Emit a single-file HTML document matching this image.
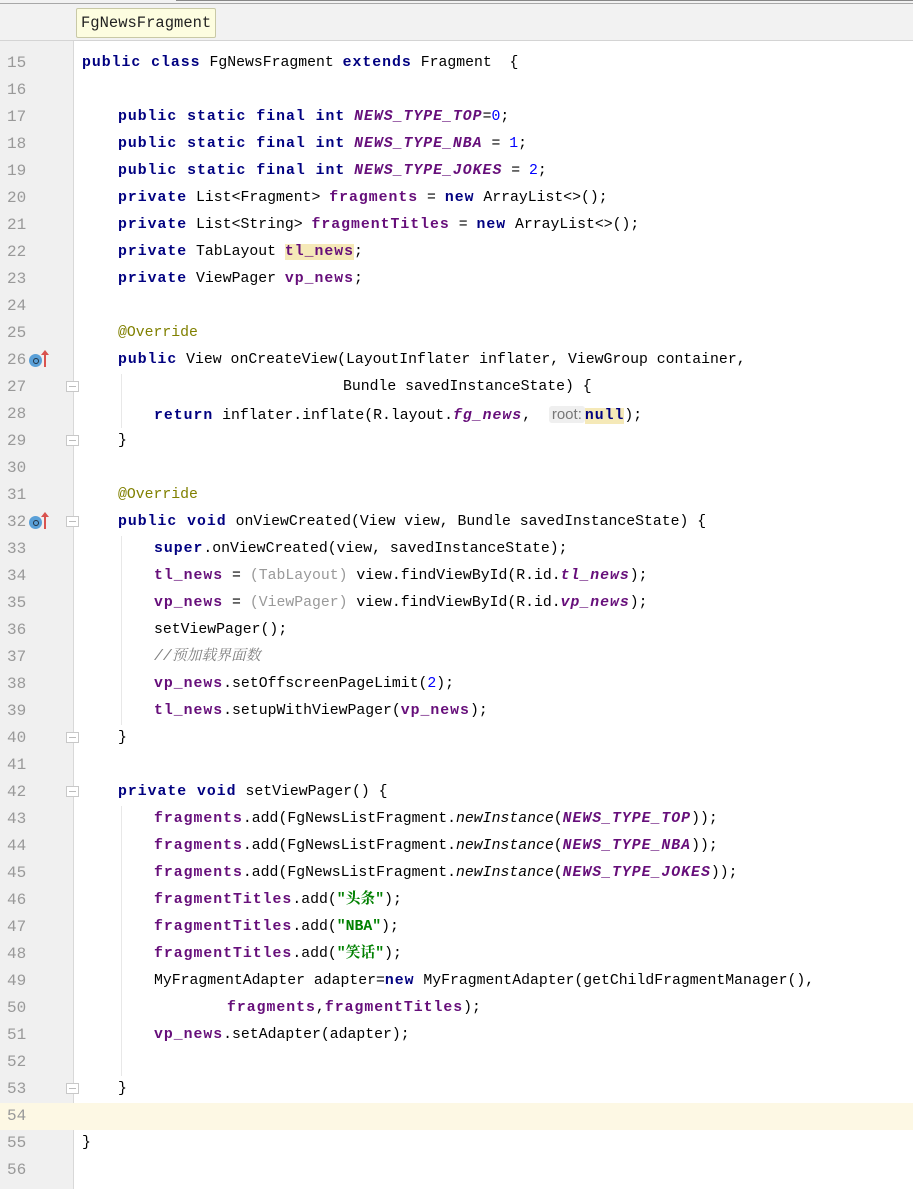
<!DOCTYPE html>
<html><head><meta charset="utf-8"><style>
html,body{margin:0;padding:0;width:913px;height:1189px;overflow:hidden;background:#fff;}
body{position:relative;font-family:"Liberation Mono","Noto Serif CJK SC",monospace;font-size:14.8px;color:#000;}
.hdr{position:absolute;left:0;top:0;width:913px;height:40px;background:#f2f2f2;border-bottom:1px solid #d4d4d4;}
.hdr .tl{position:absolute;left:0;top:3px;width:913px;height:1px;background:#a8a8a8;}
.hdr .tl2{position:absolute;left:176px;top:0;width:737px;height:1px;background:#888;}
.tip{position:absolute;left:76px;top:8px;height:28px;padding:0 4px;background:#fdfde0;border:1px solid #c9c9a6;border-radius:2px;line-height:28px;font-size:15.5px;color:#222;}
.gut{position:absolute;left:0;top:41px;width:73px;height:1148px;background:#f0f0f0;border-right:1px solid #d8d8d8;}
.hl{position:absolute;left:0;top:1103px;width:913px;height:27px;background:#fdf8e4;}
.ln{position:absolute;left:7px;width:30px;height:27px;line-height:27px;color:#999;font-size:16px;}
.c{position:absolute;height:27px;line-height:27px;white-space:pre;}
.k{color:#000080;font-weight:bold;letter-spacing:1px;}
.sf{color:#660e7a;font-weight:bold;font-style:italic;letter-spacing:1px;}
.f{color:#660e7a;font-weight:bold;letter-spacing:1px;}
.n{color:#0000ff;}
.s{color:#008000;font-weight:bold;}
.cm{color:#808080;font-style:italic;}
.an{color:#808000;}
.cast{color:#999;}
.mi{font-style:italic;}
.hint{color:#777;background:#efefef;font-family:"Liberation Sans",sans-serif;font-size:15px;padding:0 3px;border-radius:3px;letter-spacing:0;}
.yel{background:#f5e9b8;}
.fold{position:absolute;left:66px;width:13px;height:11px;border:1px solid #c8c8c8;background:#fff;box-sizing:border-box;}
.fold:after{content:"";position:absolute;left:2px;right:2px;top:4px;height:1px;background:#bbb;}
.guide{position:absolute;width:1px;background:#e8e8e8;}
.ico{position:absolute;left:29px;width:13px;height:13px;border-radius:50%;background:#5aa0d8;}
.ico:after{content:"";position:absolute;left:4px;top:4px;width:4px;height:4px;border:1px solid #234;border-radius:50%;}
.arr{position:absolute;left:44px;width:2px;height:14px;background:#d9534f;}
.arr:before{content:"";position:absolute;left:-3px;top:-3px;border-left:4px solid transparent;border-right:4px solid transparent;border-bottom:5px solid #d9534f;}
</style></head><body>
<div class="hdr"><div class="tl"></div><div class="tl2"></div><div class="tip">FgNewsFragment</div></div>
<div class="gut"></div>
<div class="hl"></div>

<div class="ln" style="top:50px">15</div><div class="ln" style="top:77px">16</div><div class="ln" style="top:104px">17</div><div class="ln" style="top:131px">18</div><div class="ln" style="top:158px">19</div><div class="ln" style="top:185px">20</div><div class="ln" style="top:212px">21</div><div class="ln" style="top:239px">22</div><div class="ln" style="top:266px">23</div><div class="ln" style="top:293px">24</div><div class="ln" style="top:320px">25</div><div class="ln" style="top:347px">26</div><div class="ln" style="top:374px">27</div><div class="ln" style="top:401px">28</div><div class="ln" style="top:428px">29</div><div class="ln" style="top:455px">30</div><div class="ln" style="top:482px">31</div><div class="ln" style="top:509px">32</div><div class="ln" style="top:536px">33</div><div class="ln" style="top:563px">34</div><div class="ln" style="top:590px">35</div><div class="ln" style="top:617px">36</div><div class="ln" style="top:644px">37</div><div class="ln" style="top:671px">38</div><div class="ln" style="top:698px">39</div><div class="ln" style="top:725px">40</div><div class="ln" style="top:752px">41</div><div class="ln" style="top:779px">42</div><div class="ln" style="top:806px">43</div><div class="ln" style="top:833px">44</div><div class="ln" style="top:860px">45</div><div class="ln" style="top:887px">46</div><div class="ln" style="top:914px">47</div><div class="ln" style="top:941px">48</div><div class="ln" style="top:968px">49</div><div class="ln" style="top:995px">50</div><div class="ln" style="top:1022px">51</div><div class="ln" style="top:1049px">52</div><div class="ln" style="top:1076px">53</div><div class="ln" style="top:1103px">54</div><div class="ln" style="top:1130px">55</div><div class="ln" style="top:1157px">56</div>

<div class="ico" style="top:354px"></div><div class="arr" style="top:353px"></div>
<div class="ico" style="top:516px"></div><div class="arr" style="top:515px"></div>
<div class="fold" style="top:381px"></div><div class="fold" style="top:435px"></div>
<div class="fold" style="top:516px"></div><div class="fold" style="top:732px"></div>
<div class="fold" style="top:786px"></div><div class="fold" style="top:1083px"></div>
<div class="guide" style="left:121px;top:374px;height:54px"></div>
<div class="guide" style="left:121px;top:536px;height:189px"></div>
<div class="guide" style="left:121px;top:806px;height:270px"></div>

<div class="c" style="left:82px;top:50px"><span class="k">public class</span> FgNewsFragment <span class="k">extends</span> Fragment  {</div>
<div class="c" style="left:118px;top:104px"><span class="k">public static final int</span> <span class="sf">NEWS_TYPE_TOP</span>=<span class="n">0</span>;</div>
<div class="c" style="left:118px;top:131px"><span class="k">public static final int</span> <span class="sf">NEWS_TYPE_NBA</span> = <span class="n">1</span>;</div>
<div class="c" style="left:118px;top:158px"><span class="k">public static final int</span> <span class="sf">NEWS_TYPE_JOKES</span> = <span class="n">2</span>;</div>
<div class="c" style="left:118px;top:185px"><span class="k">private</span> List&lt;Fragment&gt; <span class="f">fragments</span> = <span class="k">new</span> ArrayList&lt;&gt;();</div>
<div class="c" style="left:118px;top:212px"><span class="k">private</span> List&lt;String&gt; <span class="f">fragmentTitles</span> = <span class="k">new</span> ArrayList&lt;&gt;();</div>
<div class="c" style="left:118px;top:239px"><span class="k">private</span> TabLayout <span class="f yel">tl_news</span>;</div>
<div class="c" style="left:118px;top:266px"><span class="k">private</span> ViewPager <span class="f">vp_news</span>;</div>
<div class="c" style="left:118px;top:320px"><span class="an">@Override</span></div>
<div class="c" style="left:118px;top:347px"><span class="k">public</span> View onCreateView(LayoutInflater inflater, ViewGroup container,</div>
<div class="c" style="left:343px;top:374px">Bundle savedInstanceState) {</div>
<div class="c" style="left:154px;top:401px"><span class="k">return</span> inflater.inflate(R.layout.<span class="sf">fg_news</span>,  <span class="hint">root:</span><span class="k yel">null</span>);</div>
<div class="c" style="left:118px;top:428px">}</div>
<div class="c" style="left:118px;top:482px"><span class="an">@Override</span></div>
<div class="c" style="left:118px;top:509px"><span class="k">public void</span> onViewCreated(View view, Bundle savedInstanceState) {</div>
<div class="c" style="left:154px;top:536px"><span class="k">super</span>.onViewCreated(view, savedInstanceState);</div>
<div class="c" style="left:154px;top:563px"><span class="f">tl_news</span> = <span class="cast">(TabLayout)</span> view.findViewById(R.id.<span class="sf">tl_news</span>);</div>
<div class="c" style="left:154px;top:590px"><span class="f">vp_news</span> = <span class="cast">(ViewPager)</span> view.findViewById(R.id.<span class="sf">vp_news</span>);</div>
<div class="c" style="left:154px;top:617px">setViewPager();</div>
<div class="c" style="left:154px;top:644px"><span class="cm">//预加载界面数</span></div>
<div class="c" style="left:154px;top:671px"><span class="f">vp_news</span>.setOffscreenPageLimit(<span class="n">2</span>);</div>
<div class="c" style="left:154px;top:698px"><span class="f">tl_news</span>.setupWithViewPager(<span class="f">vp_news</span>);</div>
<div class="c" style="left:118px;top:725px">}</div>
<div class="c" style="left:118px;top:779px"><span class="k">private void</span> setViewPager() {</div>
<div class="c" style="left:154px;top:806px"><span class="f">fragments</span>.add(FgNewsListFragment.<span class="mi">newInstance</span>(<span class="sf">NEWS_TYPE_TOP</span>));</div>
<div class="c" style="left:154px;top:833px"><span class="f">fragments</span>.add(FgNewsListFragment.<span class="mi">newInstance</span>(<span class="sf">NEWS_TYPE_NBA</span>));</div>
<div class="c" style="left:154px;top:860px"><span class="f">fragments</span>.add(FgNewsListFragment.<span class="mi">newInstance</span>(<span class="sf">NEWS_TYPE_JOKES</span>));</div>
<div class="c" style="left:154px;top:887px"><span class="f">fragmentTitles</span>.add(<span class="s">"头条"</span>);</div>
<div class="c" style="left:154px;top:914px"><span class="f">fragmentTitles</span>.add(<span class="s">"NBA"</span>);</div>
<div class="c" style="left:154px;top:941px"><span class="f">fragmentTitles</span>.add(<span class="s">"笑话"</span>);</div>
<div class="c" style="left:154px;top:968px">MyFragmentAdapter adapter=<span class="k">new</span> MyFragmentAdapter(getChildFragmentManager(),</div>
<div class="c" style="left:227px;top:995px"><span class="f">fragments</span>,<span class="f">fragmentTitles</span>);</div>
<div class="c" style="left:154px;top:1022px"><span class="f">vp_news</span>.setAdapter(adapter);</div>
<div class="c" style="left:118px;top:1076px">}</div>
<div class="c" style="left:82px;top:1130px">}</div>
</body></html>
